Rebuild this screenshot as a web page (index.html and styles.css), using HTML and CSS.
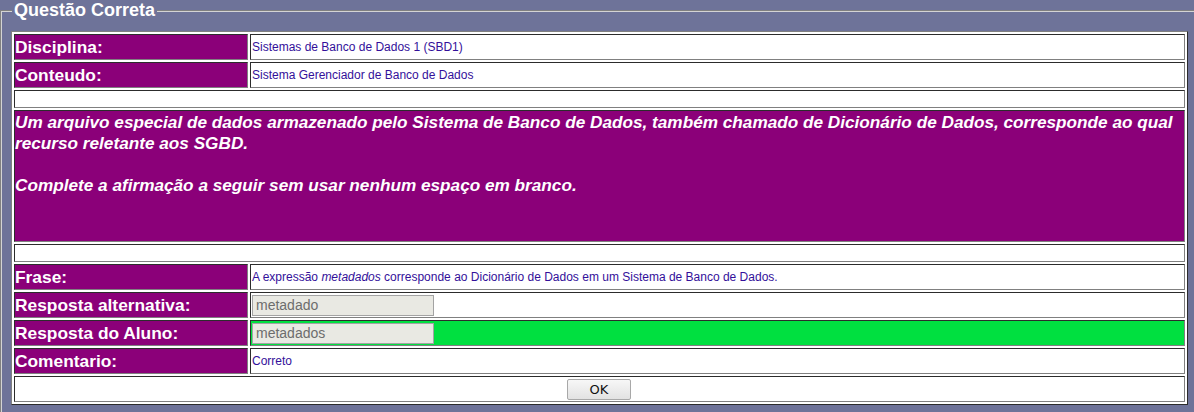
FILE: index.html
```html
<!DOCTYPE html>
<html lang="pt">
<head>
<meta charset="utf-8">
<title>Questão Correta</title>
<link rel="stylesheet" href="styles.css">
</head>
<body>
<fieldset class="box">
  <legend class="box-title">Questão Correta</legend>
  <table class="qtable">
    <tr class="row">
      <td class="label">Disciplina:</td>
      <td class="value">Sistemas de Banco de Dados 1 (SBD1)</td>
    </tr>
    <tr class="row">
      <td class="label">Conteudo:</td>
      <td class="value">Sistema Gerenciador de Banco de Dados</td>
    </tr>
    <tr class="row-empty">
      <td class="empty" colspan="2"></td>
    </tr>
    <tr class="row-question">
      <td class="question" colspan="2">Um arquivo especial de dados armazenado pelo Sistema de Banco de Dados, também chamado de Dicionário de Dados, corresponde ao qual recurso reletante aos SGBD.<br><br>Complete a afirmação a seguir sem usar nenhum espaço em branco.<br><br></td>
    </tr>
    <tr class="row-empty">
      <td class="empty" colspan="2"></td>
    </tr>
    <tr class="row">
      <td class="label">Frase:</td>
      <td class="value">A expressão <em>metadados</em> corresponde ao Dicionário de Dados em um Sistema de Banco de Dados.</td>
    </tr>
    <tr class="row">
      <td class="label">Resposta alternativa:</td>
      <td class="value"><input class="field" type="text" value="metadado" disabled></td>
    </tr>
    <tr class="row">
      <td class="label">Resposta do Aluno:</td>
      <td class="value correct"><input class="field" type="text" value="metadados" disabled></td>
    </tr>
    <tr class="row">
      <td class="label">Comentario:</td>
      <td class="value">Correto</td>
    </tr>
    <tr class="row">
      <td class="actions" colspan="2"><button class="btn" type="button">OK</button></td>
    </tr>
  </table>
</fieldset>
</body>
</html>
```

FILE: styles.css
```css
html, body {
  margin: 0;
  padding: 0;
}
body {
  background: #6e7399;
  font-family: "Liberation Sans", Arial, sans-serif;
  overflow: hidden;
  width: 1194px;
  height: 412px;
}
.box {
  margin: 0;
  padding: 10px 10px 10px 9px;
  border: 2px groove #d4d4d4;
  border-bottom: none;
  width: 1177px;
  min-width: 0;
}
.box-title {
  color: #ffffff;
  font-weight: bold;
  font-size: 18px;
  line-height: 21px;
  padding: 0 2px;
  margin-left: 1px;
}
.qtable {
  width: 1177px;
  background: #ffffff;
  border: 1px outset grey;
  border-spacing: 2px;
  border-collapse: separate;
}
.qtable td {
  border: 1px inset grey;
  padding: 1px 1px 1px 0;
}
.row {
  height: 26px;
}
.row-empty {
  height: 18px;
}
.row-question {
  height: 132px;
}
.label {
  width: 231px;
  background: #8b0079;
  color: #ffffff;
  font-weight: bold;
  font-size: 17.35px;
}
.qtable .value {
  padding-left: 1px;
  color: #33109a;
  font-size: 12px;
}
.value em {
  font-style: italic;
}
.correct {
  background: #00e040;
}
.question {
  background: #8b0079;
  color: #ffffff;
  font-weight: bold;
  font-style: italic;
  font-size: 17.2px;
  line-height: 21px;
  vertical-align: top;
}
.field {
  width: 182px;
  height: 21px;
  box-sizing: border-box;
  margin: 0;
  padding: 1px 3px;
  border: 1px solid #a3a3a3;
  background: #e9e9e3;
  color: #6d6d6d;
  font-family: "Liberation Sans", Arial, sans-serif;
  font-size: 14px;
}
.actions {
  text-align: center;
}
.btn {
  width: 64px;
  height: 21px;
  padding: 0;
  border: 1px solid #a8a8a8;
  border-radius: 2px;
  background: linear-gradient(#f7f7f7, #e2e2e2);
  color: #111111;
  font-family: "DejaVu Sans", "Liberation Sans", sans-serif;
  font-size: 13px;
}
```
